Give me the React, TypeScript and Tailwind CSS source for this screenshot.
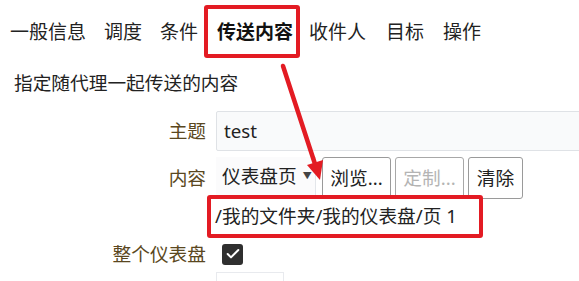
import { Check } from "lucide-react";

const font = {
  fontFamily: '"Noto Sans", "Noto Sans CJK SC", sans-serif',
};

function Tab({ label, className = "" }: { label: string; className?: string }) {
  return <div className={`text-[19px] text-[#222] ${className}`}>{label}</div>;
}

export default function App() {
  return (
    <div
      className="relative h-[281px] w-[579px] overflow-hidden bg-white"
      style={font}
    >
      {/* tabs */}
      <div className="flex h-[69px] items-start pl-[10px] pt-[5px]">
        <Tab label="一般信息" className="mt-[13px] leading-[28px]" />
        <Tab label="调度" className="ml-[18px] mt-[13px] leading-[28px]" />
        <Tab label="条件" className="ml-[18px] mt-[13px] leading-[28px]" />
        <div className="ml-[6px] flex h-[53px] items-center rounded-[3px] border-4 border-[#e31b23] pl-[9px] pr-[3px]">
          <span className="text-[19px] font-bold leading-[28px] text-[#111]">
            传送内容
          </span>
        </div>
        <Tab label="收件人" className="ml-[9px] mt-[13px] leading-[28px]" />
        <Tab label="目标" className="ml-[20px] mt-[13px] leading-[28px]" />
        <Tab label="操作" className="ml-[19px] mt-[13px] leading-[28px]" />
      </div>

      <div className="pl-[14px] text-[18.7px] leading-[28px] text-[#222]">
        指定随代理一起传送的内容
      </div>

      {/* form */}
      <div className="mt-[14px] grid grid-cols-[206px_1fr] items-center gap-x-[10px] text-[18.7px]">
        <div className="text-right text-[#5a4720]">主题</div>
        <div className="flex h-[40px] w-[420px] items-center rounded-[2px] border border-[#dfe2e6] bg-[#f9fafb] pl-[7px] text-[#222]">
          test
        </div>

        <div className="mt-[6px] text-right text-[#5a4720]">内容</div>
        <div className="mt-[6px] flex items-start">
          <div className="flex h-[39px] w-[100px] items-center border-b border-r border-[#e3e6ea] bg-[#fbfbfc] pl-[6px] text-[#222]">
            仪表盘页
            <span className="ml-[6px] text-[9px] text-[#444]">▼</span>
          </div>
          <div className="ml-[6px] flex h-[42px] w-[69px] items-center justify-center rounded-[3px] border border-[#9a9a9a] bg-white text-[#222]">
            浏览...
          </div>
          <div className="ml-[4px] flex h-[42px] w-[69px] items-center justify-center rounded-[3px] border border-[#a8a8a8] bg-white text-[#b4b4b4]">
            定制...
          </div>
          <div className="ml-[4px] flex h-[42px] w-[55px] items-center justify-center rounded-[3px] border border-[#9a9a9a] bg-white text-[#222]">
            清除
          </div>
        </div>

        <div />
        <div className="relative -ml-[9px] -mt-[4px] flex h-[43px] w-[276px] items-center rounded-[3px] border-4 border-[#e31b23] bg-white pl-[4px] text-[#222]">
          /我的文件夹/我的仪表盘/页 1
        </div>

        <div className="mt-[1px] text-right text-[#5a4720]">整个仪表盘</div>
        <div className="mt-[1px] flex h-[30px] items-center pl-[6px]">
          <div className="flex h-[21px] w-[21px] items-center justify-center rounded-[3px] bg-[#2f2f2f]">
            <Check size={16} strokeWidth={3} className="text-white" />
          </div>
        </div>

        <div />
        <div className="mt-[3px] h-[30px] w-[68px] border border-[#e8eaee] bg-white" />
      </div>

      {/* arrow */}
      <svg
        className="pointer-events-none absolute left-0 top-0"
        width="579"
        height="281"
      >
        <line
          x1="283"
          y1="66"
          x2="315"
          y2="164"
          stroke="#e31b23"
          strokeWidth="4.5"
          strokeLinecap="round"
        />
        <polygon points="320,180 323,160 307,165" fill="#e31b23" />
      </svg>
    </div>
  );
}
